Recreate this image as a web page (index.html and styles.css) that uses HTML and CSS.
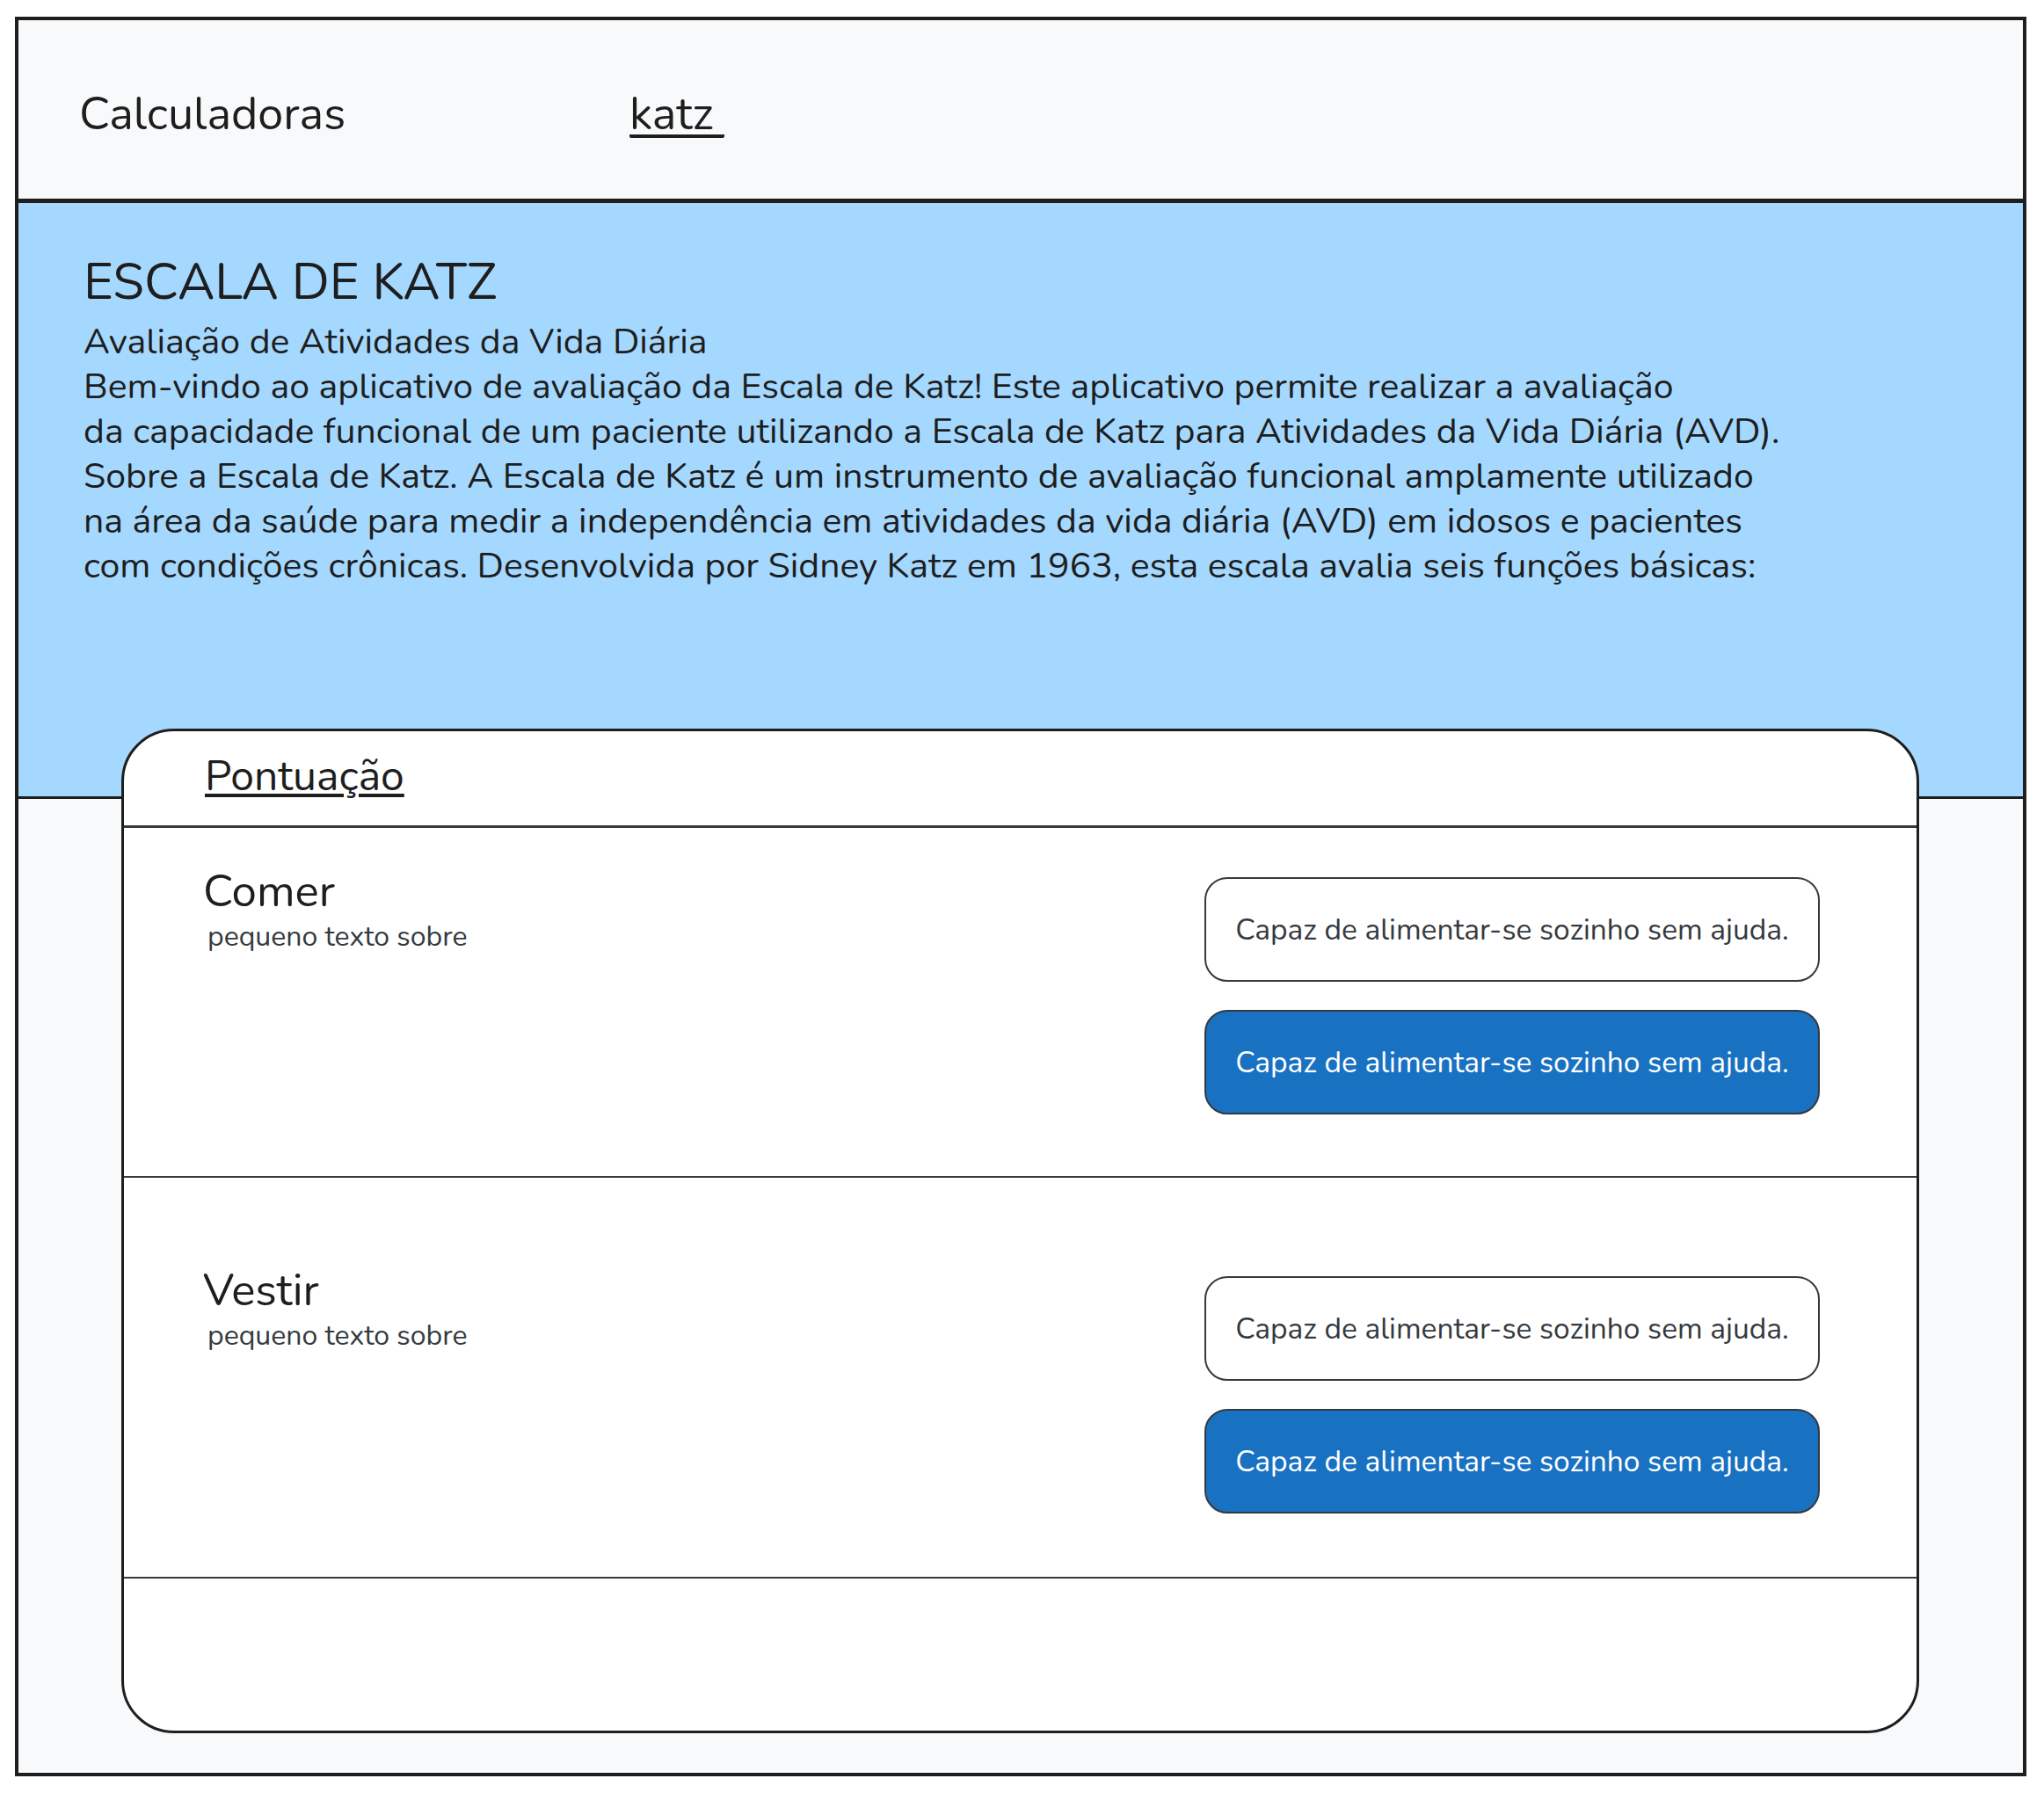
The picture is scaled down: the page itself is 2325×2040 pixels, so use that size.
FILE: index.html
```html
<!DOCTYPE html>
<html lang="pt">
<head>
<meta charset="utf-8">
<title>Escala de Katz</title>
<link rel="stylesheet" href="styles.css">
</head>
<body>
<div class="frame">
  <header class="topbar">
    <span class="brand">Calculadoras</span>
    <span class="nav-link">katz</span>
  </header>
  <section class="hero">
    <h1 class="hero-title">ESCALA DE KATZ</h1>
    <p class="hero-sub">Avaliação de Atividades da Vida Diária</p>
    <p class="hero-text">Bem-vindo ao aplicativo de avaliação da Escala de Katz! Este aplicativo permite realizar a avaliação<br>da capacidade funcional de um paciente utilizando a Escala de Katz para Atividades da Vida Diária (AVD).<br>Sobre a Escala de Katz. A Escala de Katz é um instrumento de avaliação funcional amplamente utilizado<br>na área da saúde para medir a independência em atividades da vida diária (AVD) em idosos e pacientes<br>com condições crônicas. Desenvolvida por Sidney Katz em 1963, esta escala avalia seis funções básicas:</p>
  </section>
  <main class="content">
    <div class="card">
      <div class="card-head"><span class="card-title">Pontuação</span></div>
      <div class="item item-first">
        <div class="item-info">
          <h2 class="item-name">Comer</h2>
          <p class="item-desc">pequeno texto sobre</p>
        </div>
        <div class="options">
          <button class="opt">Capaz de alimentar-se sozinho sem ajuda.</button>
          <button class="opt opt-active">Capaz de alimentar-se sozinho sem ajuda.</button>
        </div>
      </div>
      <div class="item item-second">
        <div class="item-info">
          <h2 class="item-name">Vestir</h2>
          <p class="item-desc">pequeno texto sobre</p>
        </div>
        <div class="options">
          <button class="opt">Capaz de alimentar-se sozinho sem ajuda.</button>
          <button class="opt opt-active">Capaz de alimentar-se sozinho sem ajuda.</button>
        </div>
      </div>
      <div class="item item-empty"></div>
    </div>
  </main>
</div>
</body>
</html>
```
FILE: styles.css
```css
* { box-sizing: border-box; }
html, body { margin: 0; padding: 0; background: #ffffff; }
body {
  font-family: "Nunito", "Lato", "Open Sans", sans-serif;
  color: #1e1e1e;
}
.frame {
  margin: 19px 0 0 17px;
  width: 2288px;
  height: 2002px;
  border: 4px solid #1e1e1e;
  background: #f8f9fa;
  display: flex;
  flex-direction: column;
}
.topbar {
  height: 208px;
  flex: none;
  border-bottom: 5px solid #1e1e1e;
  display: flex;
  align-items: center;
  padding: 9px 0 0 69px;
  background: #f8f9fa;
}
.brand {
  font-size: 52px;
  width: 626px;
}
.nav-link {
  font-size: 52px;
  display: inline-block;
  line-height: 47px;
  padding: 0 12px 0 0;
  margin-top: 4px;
  border-bottom: 4px solid #1e1e1e;
  border-radius: 2px;
}
.hero {
  flex: none;
  height: 678px;
  background: #a5d8ff;
  border-bottom: 3px solid #1e1e1e;
  padding: 47px 0 0 74px;
}
.hero-title {
  margin: 0;
  font-weight: 400;
  font-size: 58px;
  line-height: 85px;
}
.hero-sub {
  margin: 0;
  font-size: 41px;
  line-height: 51px;
}
.hero-text {
  margin: 0;
  font-size: 41px;
  line-height: 51px;
  white-space: nowrap;
}
.content {
  flex: 1;
  padding: 0 118px 0 117px;
}
.card {
  margin-top: -80px;
  height: 1143px;
  background: #ffffff;
  border: 3px solid #1e1e1e;
  border-radius: 60px;
  display: flex;
  flex-direction: column;
}
.card-head {
  height: 110px;
  padding: 18px 0 0 92px;
  border-bottom: 3px solid #343a40;
}
.card-title {
  font-size: 48px;
  text-decoration: underline;
  text-decoration-thickness: 4px;
  text-underline-offset: 4px;
}
.item {
  display: flex;
  justify-content: space-between;
  border-bottom: 2px solid #343a40;
  padding: 0 110px 0 90px;
}
.item-first { height: 398px; padding-top: 56px; }
.item-second { height: 456px; padding-top: 112px; }
.item-empty { border-bottom: none; flex: 1; }
.item-info { margin-top: -12px; }
.item-name {
  margin: 0;
  font-weight: 400;
  font-size: 51px;
  line-height: 56px;
}
.item-desc {
  margin: 2px 0 0 5px;
  font-size: 32px;
  color: #343a40;
}
.options {
  display: flex;
  flex-direction: column;
  gap: 32px;
}
.opt {
  width: 700px;
  height: 119px;
  border: 2px solid #343a40;
  border-radius: 26px;
  background: #ffffff;
  color: #343a40;
  font-family: inherit;
  font-size: 33.5px;
  padding: 0;
}
.opt-active {
  background: #1971c2;
  color: #ffffff;
}
```
